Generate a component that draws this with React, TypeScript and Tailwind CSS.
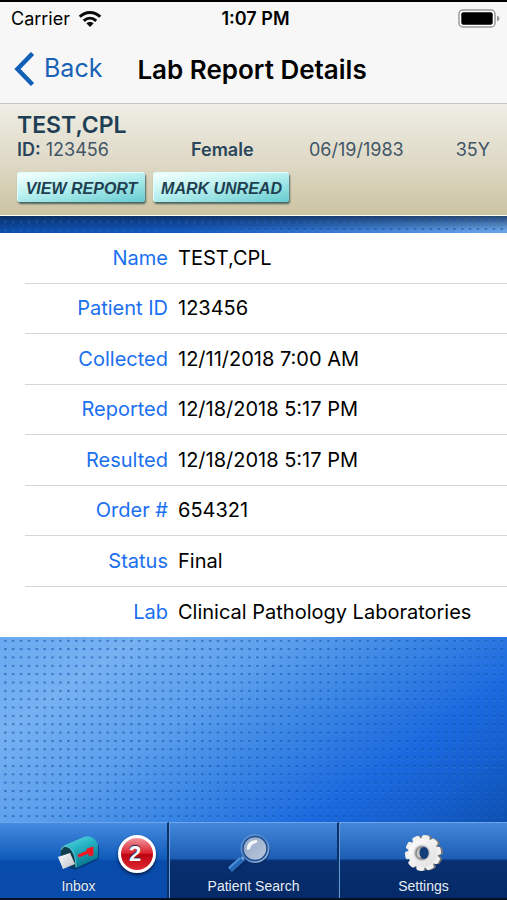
import React from "react";

const details: [string, string][] = [
  ["Name", "TEST,CPL"],
  ["Patient ID", "123456"],
  ["Collected", "12/11/2018 7:00 AM"],
  ["Reported", "12/18/2018 5:17 PM"],
  ["Resulted", "12/18/2018 5:17 PM"],
  ["Order #", "654321"],
  ["Status", "Final"],
  ["Lab", "Clinical Pathology Laboratories"],
];

function WifiIcon() {
  return (
    <svg width="24" height="18" viewBox="0 0 24 18" aria-hidden="true">
      <g fill="none" stroke="#0a0a0a" strokeWidth="3">
        <path d="M1.8 6.8C7.600 .9 16.400 .9 22.200 6.800" />
        <path d="M5.800 10.900C9.500 7.400 14.500 7.400 18.200 10.900" />
      </g>
      <path d="M8.300 13.300Q12 10.200 15.700 13.300L12 17Z" fill="#0a0a0a" />
    </svg>
  );
}

function BatteryIcon() {
  return (
    <svg width="42" height="20" viewBox="0 0 42 20" role="img" aria-label="Battery full">
      <rect x="1" y="1" width="36" height="17" rx="4" fill="#fff" stroke="#999" strokeWidth="1.500" />
      <rect x="3.300" y="3.300" width="31.400" height="12.400" rx="2" fill="#000" />
      <path d="M39 6.500Q41.500 7.500 41.500 9.500T39 12.500Z" fill="#999" />
    </svg>
  );
}

function MailboxIcon() {
  return (
    <svg width="46" height="42" viewBox="0 0 46 42" aria-hidden="true">
      <defs>
        <linearGradient id="box" x1="0" y1="0" x2=".5" y2="1">
          <stop offset="0" stopColor="#6fd9e4" />
          <stop offset=".45" stopColor="#27b7c6" />
          <stop offset="1" stopColor="#08758d" />
        </linearGradient>
        <linearGradient id="letter" x1="0" y1="0" x2="1" y2="1">
          <stop offset="0" stopColor="#fff" />
          <stop offset="1" stopColor="#b9bfc6" />
        </linearGradient>
      </defs>
      <path d="M12 35L20 37L43 26L43 12Z" fill="#062b61" opacity=".6" />
      <path d="M5 17Q5 13 9 12L28 4Q33 2 37 5Q42 8 42 14V25L20 35L13 31Z" fill="url(#box)" />
      <path d="M5 23V17Q6 11 12 14Q19 18 20 35L13 32Z" fill="#123b4c" />
      <path d="M5 17Q8 11 14 15Q20 20 20 34" fill="none" stroke="#52bfcc" strokeWidth="1.200" />
      <path d="M2 24L14 20L19 31L7 36Z" fill="url(#letter)" />
      <path d="M2 24L11 27L14 20M7 36L11 27" fill="none" stroke="#d6d8dc" strokeWidth=".7" />
      <path d="M22 22L31 18V16L37 14V22L33 23V20L23 24Z" fill="#ed1622" stroke="#ed1622" strokeWidth=".8" />
    </svg>
  );
}

function MagnifierIcon() {
  return (
    <svg width="46" height="42" viewBox="0 0 46 42" aria-hidden="true">
      <defs>
        <linearGradient id="glass" x1="0" y1="0" x2="1" y2="1">
          <stop offset="0" stopColor="#8fa4c4" />
          <stop offset="1" stopColor="#bccade" />
        </linearGradient>
        <linearGradient id="rim" x1="0" y1="0" x2="1" y2="1">
          <stop offset="0" stopColor="#5f9bdc" />
          <stop offset=".5" stopColor="#4c82c4" />
          <stop offset="1" stopColor="#9fc0e6" />
        </linearGradient>
      </defs>
      <path d="M17 28L6 38" stroke="#061f4b" strokeWidth="6" opacity=".5" />
      <path d="M17 25L4 37" stroke="#2468b7" strokeWidth="6" />
      <path d="M14 25L3 35" stroke="#4f90da" strokeWidth="2" />
      <path d="M20 22L16 26" stroke="#8eb8e8" strokeWidth="3" />
      <circle cx="29.500" cy="17" r="14.500" fill="#0a2554" opacity=".6" />
      <circle cx="29" cy="15.500" r="13.500" fill="url(#glass)" stroke="url(#rim)" strokeWidth="2" />
      <circle cx="29" cy="15.500" r="12" fill="none" stroke="#1c4a8c" strokeWidth="1.500" />
      <path d="M21 17Q20 8 30 7Q33 8 30 10Q25 11 24 16Z" fill="#fff" opacity=".88" />
    </svg>
  );
}

function GearIcon() {
  const teeth = [0, 36, 72, 108, 144, 180, 216, 252, 288, 324];
  return (
    <svg width="42" height="42" viewBox="0 0 42 42" aria-hidden="true">
      <defs>
        <linearGradient id="gear" x1="0" y1="0" x2="1" y2="1">
          <stop offset="0" stopColor="#fff" />
          <stop offset="1" stopColor="#dedede" />
        </linearGradient>
      </defs>
      {["#777", "#f0f0ef"].map((color, layer) => (
        <g key={color} fill={color} transform={layer === 0 ? "translate(2 0)" : undefined}>
          <circle cx="20" cy="20" r="15" />
          {teeth.map((angle) => (
            <rect key={angle} x="16" y="2" width="8" height="8" rx="2.500" transform={`rotate(${angle + 10} 20 20)`} />
          ))}
        </g>
      ))}
      <circle cx="20" cy="20" r="14" fill="url(#gear)" />
      <circle cx="19" cy="20" r="8.500" fill="#d6d6d6" />
      <circle cx="19" cy="20" r="7" fill="#8d8d8d" />
      <ellipse cx="21" cy="20" rx="4.500" ry="6" fill="#123e7b" />
      <path d="M15 24Q12 19 17 14Q15 20 18 25Z" fill="#c9c9c9" />
    </svg>
  );
}

function Dots({ id, offset = 0 }: { id: string; offset?: number }) {
  return (
    <svg className="block h-full w-full" aria-hidden="true">
      <defs>
        <pattern id={id} y={offset} width="7.880" height="8.350" patternUnits="userSpaceOnUse">
          <rect x="4.200" y="2.700" width="2.200" height="2.200" rx=".5" fill="#0d4fae" opacity=".68" />
          <path d="M4.300 5.300H6.500" stroke="#9acbff" strokeWidth=".7" opacity=".25" />
        </pattern>
      </defs>
      <rect width="100%" height="100%" fill={`url(#${id})`} />
    </svg>
  );
}

const actionClass =
  "h-[30px] rounded-[3px] border-t border-l border-[#dfffff] bg-[linear-gradient(170deg,#f0fffd_5%,#b9f0ef_45%,#65cbd0_100%)] pt-[2px] text-center font-['Liberation_Sans',Arial,sans-serif] text-[16px] leading-[26px] font-bold text-[#203f51] italic shadow-[1px_2px_2px_#4a6260]";

const tabClass =
  "relative flex h-full flex-1 flex-col items-center pt-[8px] font-['Liberation_Sans',Arial,sans-serif] text-[14px] leading-[18px] text-[#e4edf9] [text-shadow:0_-1px_1px_#0a285a]";

export default function App() {
  return (
    <div className="flex min-h-screen flex-col border-t-2 border-black bg-[#f7f7f7] font-['Inter','Liberation_Sans',sans-serif] text-black">
      <div className="grid h-[33px] grid-cols-3 items-center pr-[7px] pl-[11px]">
        <div className="flex items-center gap-[8px] text-[18px]">
          <span>Carrier</span>
          <WifiIcon />
        </div>
        <time className="text-center text-[18px] font-semibold">1:07 PM</time>
        <div className="flex justify-end">
          <BatteryIcon />
        </div>
      </div>

      <nav className="flex h-[69px] items-center border-b border-[#c6c6c5] pl-[14px]">
        <button type="button" className="flex items-center gap-[9px] text-[25px] text-[#1762b6]">
          <svg width="21" height="34" viewBox="0 0 21 34" aria-hidden="true">
            <path d="M18.500 1.500L3.500 17L18.500 32.500" fill="none" stroke="#1260b6" strokeWidth="4.500" />
          </svg>
          Back
        </button>
        <h1 className="pl-[35px] text-[26px] font-semibold">Lab Report Details</h1>
      </nav>

      <header className="h-[112px] border-b border-[#fffef5] bg-[linear-gradient(#efeee5,#ded8c5_55%,#cbc3a1)] px-[17px] pt-[8px] text-[#203f54]">
        <h2 className="text-[23px] leading-[26px] font-semibold">TEST,CPL</h2>
        <div className="flex text-[18px] leading-[24px] text-[#405566]">
          <p className="w-[174px]">
            <strong className="font-semibold text-[#29465b]">ID:</strong> 123456
          </p>
          <p className="w-[118px] font-semibold text-[#29465b]">Female</p>
          <p>06/19/1983</p>
          <p className="ml-auto">35Y</p>
        </div>
        <div className="mt-[10px] flex gap-[8px]">
          <button type="button" className={`${actionClass} w-[128px]`}>VIEW REPORT</button>
          <button type="button" className={`${actionClass} w-[136px]`}>MARK UNREAD</button>
        </div>
      </header>

      <div className="h-[17px] bg-[linear-gradient(#0a2348b3,#0b3a8000_85%),linear-gradient(90deg,#0d4daa,#1257bd_35%,#2a6cc8_58%,#6ba5e6)]">
        <Dots id="upper-dots" offset={1} />
      </div>

      <dl className="grid h-[404px] auto-rows-fr bg-white pl-[25px] text-[20px]">
        {details.map(([label, value]) => (
          <div key={label} className="flex items-center gap-[10px] border-b border-[#d6d6d8] last:border-b-0">
            <dt className="w-[143px] text-right text-[#1a70f0]">{label}</dt>
            <dd>{value}</dd>
          </div>
        ))}
      </dl>

      <main className="h-[185px] grow bg-[linear-gradient(145deg,#6aaaf0_0%,#76b1f1_18%,#5c9fec_38%,#3a86e4_55%,#1b69df_74%,#1560d0_86%,#0d50b0_100%)]">
        <Dots id="lower-dots" />
      </main>

      <footer className="flex h-[78px] border-b-2 border-[#061126] bg-[linear-gradient(#4488db,#1d5eb4_48%,#082f70_51%,#062a67)]">
        <button type="button" className={`${tabClass} border-t border-r-2 border-t-[#6fa5eb] border-r-[#0b3268] bg-[linear-gradient(#458be0,#105ab9_48%,#074bab_51%,#0a4cac)]`}>
          <span className="flex h-[46px] items-center pr-[10px]"><MailboxIcon /></span>
          <span className="pr-[10px]">Inbox</span>
          <span className="absolute top-[12px] right-[11px] flex h-[38px] w-[38px] items-center justify-center rounded-full border-3 border-white bg-[linear-gradient(#f2959b,#da202d_48%,#bd0210_52%,#e02b35)] pr-[4px] text-[22px] font-bold text-white shadow-[0_2px_3px_#071f49]">2</span>
        </button>
        <button type="button" className={`${tabClass} border-t border-r-2 border-l border-t-[#6fa5eb] border-r-[#0b3268] border-l-[#6498d7]`}>
          <span className="flex h-[46px] items-center pr-[10px]"><MagnifierIcon /></span>
          Patient Search
        </button>
        <button type="button" className={`${tabClass} border-t border-l border-t-[#6fa5eb] border-l-[#6498d7]`}>
          <span className="flex h-[46px] items-center"><GearIcon /></span>
          Settings
        </button>
      </footer>
    </div>
  );
}
